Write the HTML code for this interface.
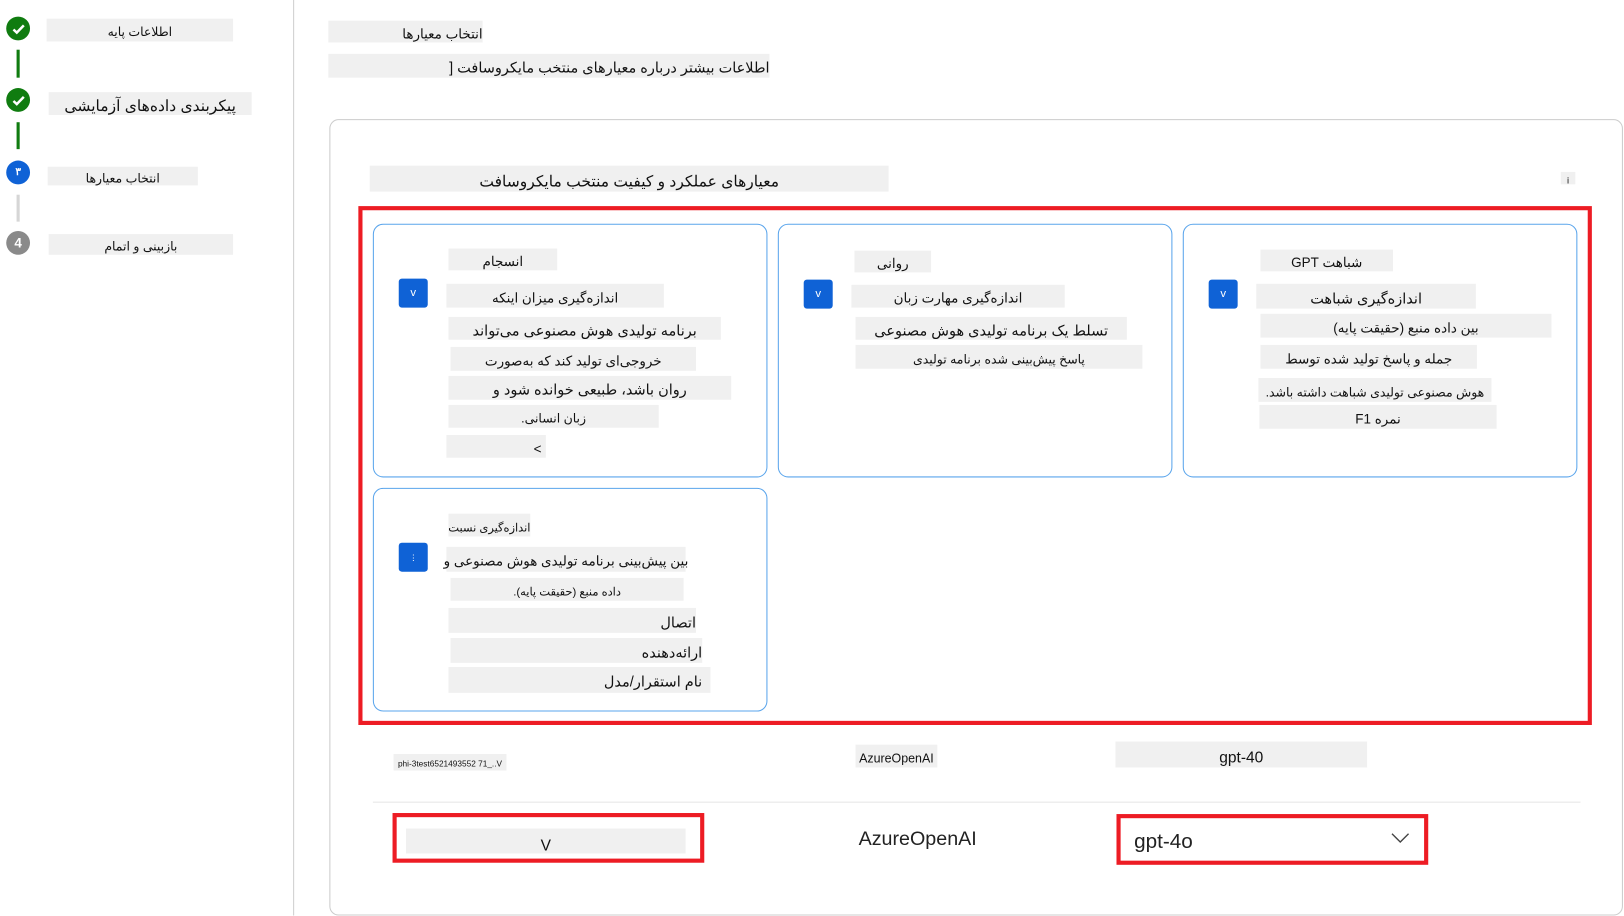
<!DOCTYPE html>
<html><head><meta charset="utf-8"><style>
html,body{margin:0;padding:0;width:1624px;height:916px;overflow:hidden;background:#fff}
#w{position:absolute;left:0;top:0;width:1568px;height:884px;transform:scale(1.0357);transform-origin:0 0;font-family:"Liberation Sans","Noto Sans CJK SC",sans-serif;color:#111}
.b{position:absolute;background:#f0f0f0;direction:rtl;text-align:center;white-space:nowrap;font-size:13px;box-sizing:border-box;display:flex;align-items:center;justify-content:center;padding-top:4px}
.r{justify-content:flex-start}
.a{position:absolute}
.card{position:absolute;border:1px solid #5aa5ec;border-radius:10px;box-sizing:border-box;background:#fff}
.cb{position:absolute;width:28px;height:28px;background:#0f62d6;border-radius:3px;color:#fff;font-size:11px;display:flex;align-items:center;justify-content:center}
.circ{position:absolute;width:23px;height:23px;border-radius:50%;left:6px;display:flex;align-items:center;justify-content:center;color:#fff;font-size:12px;font-weight:bold}
.vl{position:absolute;left:16px;width:3px}
</style></head><body><div id="w">
<div class="circ" style="top:16px;background:#107c10"><svg width="14" height="14" viewBox="0 0 14 14"><path d="M2 7.5l3.2 3L12 3.5" stroke="#fff" stroke-width="2.4" fill="none"/></svg></div>
<div class="vl" style="top:48px;height:27px;background:#107c10"></div>
<div class="circ" style="top:85px;background:#107c10"><svg width="14" height="14" viewBox="0 0 14 14"><path d="M2 7.5l3.2 3L12 3.5" stroke="#fff" stroke-width="2.4" fill="none"/></svg></div>
<div class="vl" style="top:118px;height:26px;background:#107c10"></div>
<div class="circ" style="top:155px;background:#0f62d6;font-size:10px">۳</div>
<div class="vl" style="top:188px;height:26px;background:#d6d6d6"></div>
<div class="circ" style="top:223px;background:#8a8a8a;font-size:13px">4</div>
<div class="b" style="left:45px;top:18px;width:180px;height:22px;font-size:12px">اطلاعات پایه</div>
<div class="b" style="left:47px;top:89px;width:196px;height:22px;font-size:15px">پیکربندی داده‌های آزمایشی</div>
<div class="b" style="left:46px;top:161px;width:145px;height:18px;font-size:12px">انتخاب معیارها</div>
<div class="b" style="left:47px;top:226px;width:178px;height:20px;font-size:12px">بازبینی و اتمام</div>
<div class="a" style="left:283px;top:0;width:1px;height:884px;background:#d0d0d0"></div>
<div class="b" style="left:317px;top:20px;width:149px;height:21px;justify-content:flex-start;font-size:13px">انتخاب معیارها</div>
<div class="b" style="left:317px;top:52px;width:426px;height:23px;justify-content:flex-start;font-size:14px">اطلاعات بیشتر درباره معیارهای منتخب مایکروسافت [</div>
<div class="a" style="left:318px;top:115px;width:1249px;height:769px;border:1px solid #ccc;border-radius:9px;box-sizing:border-box"></div>
<div class="b" style="left:357px;top:160px;width:501px;height:25px;font-size:15px">معیارهای عملکرد و کیفیت منتخب مایکروسافت</div>
<div class="b" style="left:1507px;top:166px;width:14px;height:12px;font-size:9px">i</div>
<div class="a" style="left:346px;top:199px;width:1191px;height:501px;border:4px solid #ed1c24;box-sizing:border-box"></div>
<div class="card" style="left:360px;top:216px;width:381px;height:245px"></div>
<div class="cb" style="left:385px;top:269px">v</div>
<div class="b" style="left:433px;top:240px;width:105px;height:21px">انسجام</div>
<div class="b" style="left:431px;top:274px;width:210px;height:23px">اندازه‌گیری میزان اینکه</div>
<div class="b" style="left:433px;top:306px;width:263px;height:22px;font-size:14px">برنامه تولیدی هوش مصنوعی می‌تواند</div>
<div class="b" style="left:435px;top:335px;width:237px;height:23px">خروجی‌ای تولید کند که به‌صورت</div>
<div class="b" style="left:433px;top:363px;width:273px;height:23px;font-size:14px">روان باشد، طبیعی خوانده شود و</div>
<div class="b" style="left:433px;top:391px;width:203px;height:22px;font-size:12px">زبان انسانی.</div>
<div class="b" style="left:431px;top:420px;width:96px;height:22px;padding-left:80px">&gt;</div>
<div class="card" style="left:751px;top:216px;width:381px;height:245px"></div>
<div class="cb" style="left:776px;top:270px">v</div>
<div class="b" style="left:825px;top:242px;width:74px;height:21px">روانی</div>
<div class="b" style="left:822px;top:275px;width:206px;height:22px">اندازه‌گیری مهارت زبان</div>
<div class="b" style="left:826px;top:306px;width:262px;height:22px;font-size:14px">تسلط یک برنامه تولیدی هوش مصنوعی</div>
<div class="b" style="left:826px;top:333px;width:277px;height:23px;font-size:12px">پاسخ پیش‌بینی شده برنامه تولیدی</div>
<div class="card" style="left:1142px;top:216px;width:381px;height:245px"></div>
<div class="cb" style="left:1167px;top:270px">v</div>
<div class="b" style="left:1217px;top:241px;width:128px;height:21px">شباهت GPT</div>
<div class="b" style="left:1213px;top:274px;width:212px;height:24px;font-size:14px">اندازه‌گیری شباهت</div>
<div class="b" style="left:1217px;top:303px;width:281px;height:23px">بین داده منبع (حقیقت پایه)</div>
<div class="b" style="left:1217px;top:333px;width:209px;height:23px">جمله و پاسخ تولید شده توسط</div>
<div class="b" style="left:1215px;top:365px;width:225px;height:23px;font-size:12px">هوش مصنوعی تولیدی شباهت داشته باشد.</div>
<div class="b" style="left:1216px;top:391px;width:229px;height:23px">نمره F1</div>
<div class="card" style="left:360px;top:471px;width:381px;height:216px"></div>
<div class="cb" style="left:385px;top:524px;font-size:8px">⋮</div>
<div class="b" style="left:433px;top:496px;width:79px;height:22px;font-size:11px">اندازه‌گیری نسبت</div>
<div class="b" style="left:431px;top:528px;width:231px;height:24px">بین پیش‌بینی برنامه تولیدی هوش مصنوعی و</div>
<div class="b" style="left:435px;top:558px;width:225px;height:22px;font-size:11px">داده منبع (حقیقت پایه).</div>
<div class="b r" style="left:433px;top:587px;width:239px;height:24px;font-size:14px">اتصال</div>
<div class="b r" style="left:435px;top:616px;width:243px;height:24px;font-size:14px">ارائه‌دهنده</div>
<div class="b r" style="left:433px;top:644px;width:253px;height:25px;font-size:14px;padding-right:8px">نام استقرار/مدل</div>
<div class="b" style="left:380px;top:728px;width:109px;height:16px;font-size:8px;direction:ltr;padding-top:2px">phi-3test6521493552 71_..V</div>
<div class="b" style="left:826px;top:719px;width:79px;height:22px;font-size:12px;direction:ltr">AzureOpenAI</div>
<div class="b" style="left:1077px;top:716px;width:243px;height:25px;font-size:15px;direction:ltr;padding-top:6px">gpt-40</div>
<div class="a" style="left:360px;top:774px;width:1166px;height:1px;background:#e6e6e6"></div>
<div class="a" style="left:379px;top:785px;width:301px;height:48px;border:4px solid #ed1c24;box-sizing:border-box"></div>
<div class="b" style="left:392px;top:800px;width:270px;height:24px;font-size:15px;direction:ltr;padding-top:8px">V</div>
<div class="a" style="left:829px;top:800px;font-size:19px;color:#222">AzureOpenAI</div>
<div class="a" style="left:1078px;top:786px;width:301px;height:49px;border:4px solid #ed1c24;box-sizing:border-box"></div>
<div class="a" style="left:1095px;top:802px;font-size:20px;color:#222">gpt-4o</div>
<svg class="a" style="left:1343px;top:803px" width="18" height="12" viewBox="0 0 18 12"><path d="M1 2l8 8 8-8" stroke="#444" stroke-width="1.3" fill="none"/></svg>
</div></body></html>
